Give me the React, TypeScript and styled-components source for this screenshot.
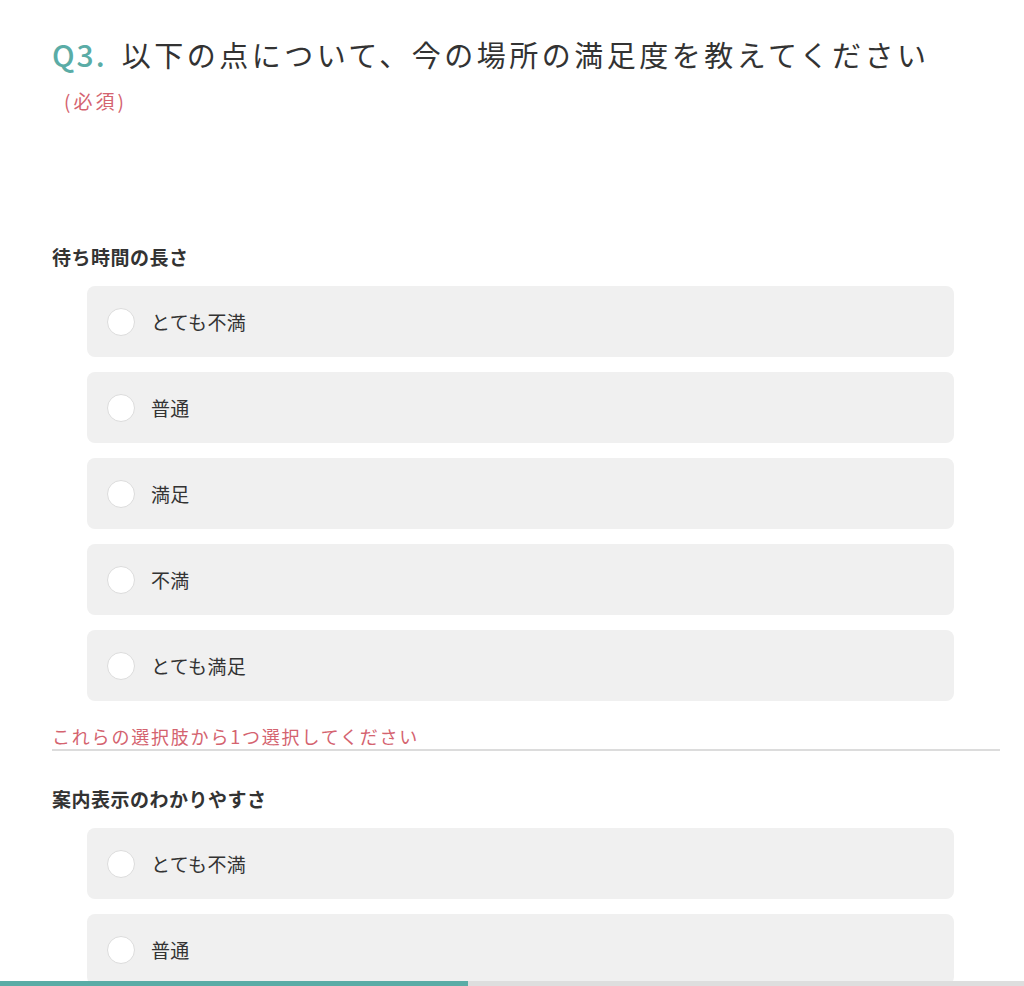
import React from "react";
import styled, { createGlobalStyle } from "styled-components";

const GlobalStyle = createGlobalStyle`
  body {
    margin: 0;
    background: #fff;
    font-family: "Noto Sans CJK JP", "Noto Sans", sans-serif;
    color: #333;
  }
`;

const Page = styled.div`
  padding: 34px 24px 40px 52px;
`;

const Title = styled.h1`
  margin: 0;
  font-size: 29px;
  line-height: 40px;
  font-weight: 400;
  letter-spacing: 3.5px;
  color: #333;
  span {
    font-size: 30px;
    font-weight: 500;
    color: #5aaca6;
    letter-spacing: 2px;
    margin-right: 15px;
  }
`;

const Required = styled.div`
  margin: 14px 0 0 12px;
  font-size: 19px;
  line-height: 26px;
  letter-spacing: 3px;
  color: #d4636f;
`;

const Question = styled.section<{ $first?: boolean }>`
  margin-top: ${(p) => (p.$first ? "130px" : "35px")};
`;

const Label = styled.div`
  font-size: 19px;
  line-height: 26px;
  font-weight: 700;
  letter-spacing: 0.5px;
  color: #333;
  margin-bottom: 16px;
`;

const Options = styled.div`
  margin-left: 35px;
  width: 867px;
  display: flex;
  flex-direction: column;
  gap: 15px;
`;

const Option = styled.label`
  height: 71px;
  border-radius: 8px;
  background: #f0f0f0;
  display: flex;
  align-items: center;
  padding-left: 20px;
  cursor: pointer;
`;

const Radio = styled.span`
  width: 28px;
  height: 28px;
  box-sizing: border-box;
  border-radius: 50%;
  background: #fff;
  border: 1px solid #dcdcdc;
  margin-right: 16px;
`;

const OptionText = styled.span`
  font-size: 19px;
  line-height: 26px;
  letter-spacing: 0.3px;
  color: #333;
`;

const ErrorText = styled.div`
  margin-top: 22px;
  font-size: 18px;
  line-height: 26px;
  letter-spacing: 1.8px;
  color: #d4636f;
  border-bottom: 2px solid #dcdcdc;
`;

const Progress = styled.div`
  position: fixed;
  left: 0;
  right: 0;
  bottom: 0;
  height: 5px;
  background: #dedede;
`;

const ProgressFill = styled.div`
  height: 100%;
  background: #5aaca6;
`;

const choices = ["とても不満", "普通", "満足", "不満", "とても満足"];

const questions = [
  { label: "待ち時間の長さ", error: true },
  { label: "案内表示のわかりやすさ", error: false },
];

export default function App() {
  return (
    <>
      <GlobalStyle />
      <Page>
        <Title>
          <span>Q3.</span>以下の点について、今の場所の満足度を教えてください
        </Title>
        <Required>(必須)</Required>
        {questions.map((q, i) => (
          <Question key={q.label} $first={i === 0}>
            <Label>{q.label}</Label>
            <Options>
              {choices.map((c) => (
                <Option key={c}>
                  <Radio />
                  <OptionText>{c}</OptionText>
                </Option>
              ))}
            </Options>
            {q.error && <ErrorText>これらの選択肢から1つ選択してください</ErrorText>}
          </Question>
        ))}
      </Page>
      <Progress>
        <ProgressFill style={{ width: `${(468 / 1024) * 100}%` }} />
      </Progress>
    </>
  );
}
